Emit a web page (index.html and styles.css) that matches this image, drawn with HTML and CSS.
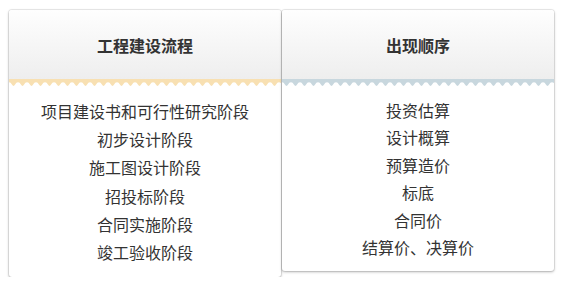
FILE: index.html
```html
<!DOCTYPE html>
<html lang="zh">
<head>
<meta charset="utf-8">
<link rel="stylesheet" href="styles.css">
</head>
<body>
<div class="wrap">
  <div class="card card-left">
    <div class="head">工程建设流程</div>
    <svg class="zig" width="272" height="8" aria-hidden="true">
      <defs>
        <pattern id="zl" width="9" height="8" patternUnits="userSpaceOnUse">
          <path d="M0 0H9V3.2Q7.2 3.2 6.1 5.6Q4.5 8.4 2.9 5.6Q1.8 3.2 0 3.2Z" fill="#f8e0b2"/>
        </pattern>
      </defs>
      <rect width="272" height="8" fill="url(#zl)"/>
    </svg>
    <ul class="list list-left">
      <li>项目建设书和可行性研究阶段</li>
      <li>初步设计阶段</li>
      <li>施工图设计阶段</li>
      <li>招投标阶段</li>
      <li>合同实施阶段</li>
      <li>竣工验收阶段</li>
    </ul>
  </div>
  <div class="card card-right">
    <div class="head">出现顺序</div>
    <svg class="zig" width="272" height="8" aria-hidden="true">
      <defs>
        <pattern id="zr" width="9" height="8" patternUnits="userSpaceOnUse">
          <path d="M0 0H9V3.2Q7.2 3.2 6.1 5.6Q4.5 8.4 2.9 5.6Q1.8 3.2 0 3.2Z" fill="#c8d7de"/>
        </pattern>
      </defs>
      <rect width="272" height="8" fill="url(#zr)"/>
    </svg>
    <ul class="list list-right">
      <li>投资估算</li>
      <li>设计概算</li>
      <li>预算造价</li>
      <li>标底</li>
      <li>合同价</li>
      <li>结算价、决算价</li>
    </ul>
  </div>
</div>
</body>
</html>
```
FILE: styles.css
```css
html, body {
  margin: 0;
  padding: 0;
  background: #fff;
}
body {
  font-family: "Noto Sans CJK SC", "Noto Sans", sans-serif;
  color: #333;
}
.wrap {
  display: flex;
  align-items: flex-start;
  gap: 1px;
  padding: 10px 0 0 9px;
}
.card {
  width: 272px;
  background: #fff;
  border-radius: 3px;
  overflow: hidden;
  box-shadow: 0 0 0 1px rgba(0, 0, 0, 0.07), 0 1px 3px rgba(0, 0, 0, 0.28);
}
.head {
  height: 69px;
  display: flex;
  align-items: center;
  justify-content: center;
  font-size: 16px;
  font-weight: bold;
  color: #333;
  background: linear-gradient(#fefefe, #eeeeee);
}
.zig {
  display: block;
}
.list {
  list-style: none;
  margin: 0;
  text-align: center;
  font-size: 16px;
  color: #333;
}
.list-left {
  padding: 10px 0 11px;
  line-height: 28.2px;
}
.list-right {
  padding: 10px 0 10px;
  line-height: 27.4px;
}
```
